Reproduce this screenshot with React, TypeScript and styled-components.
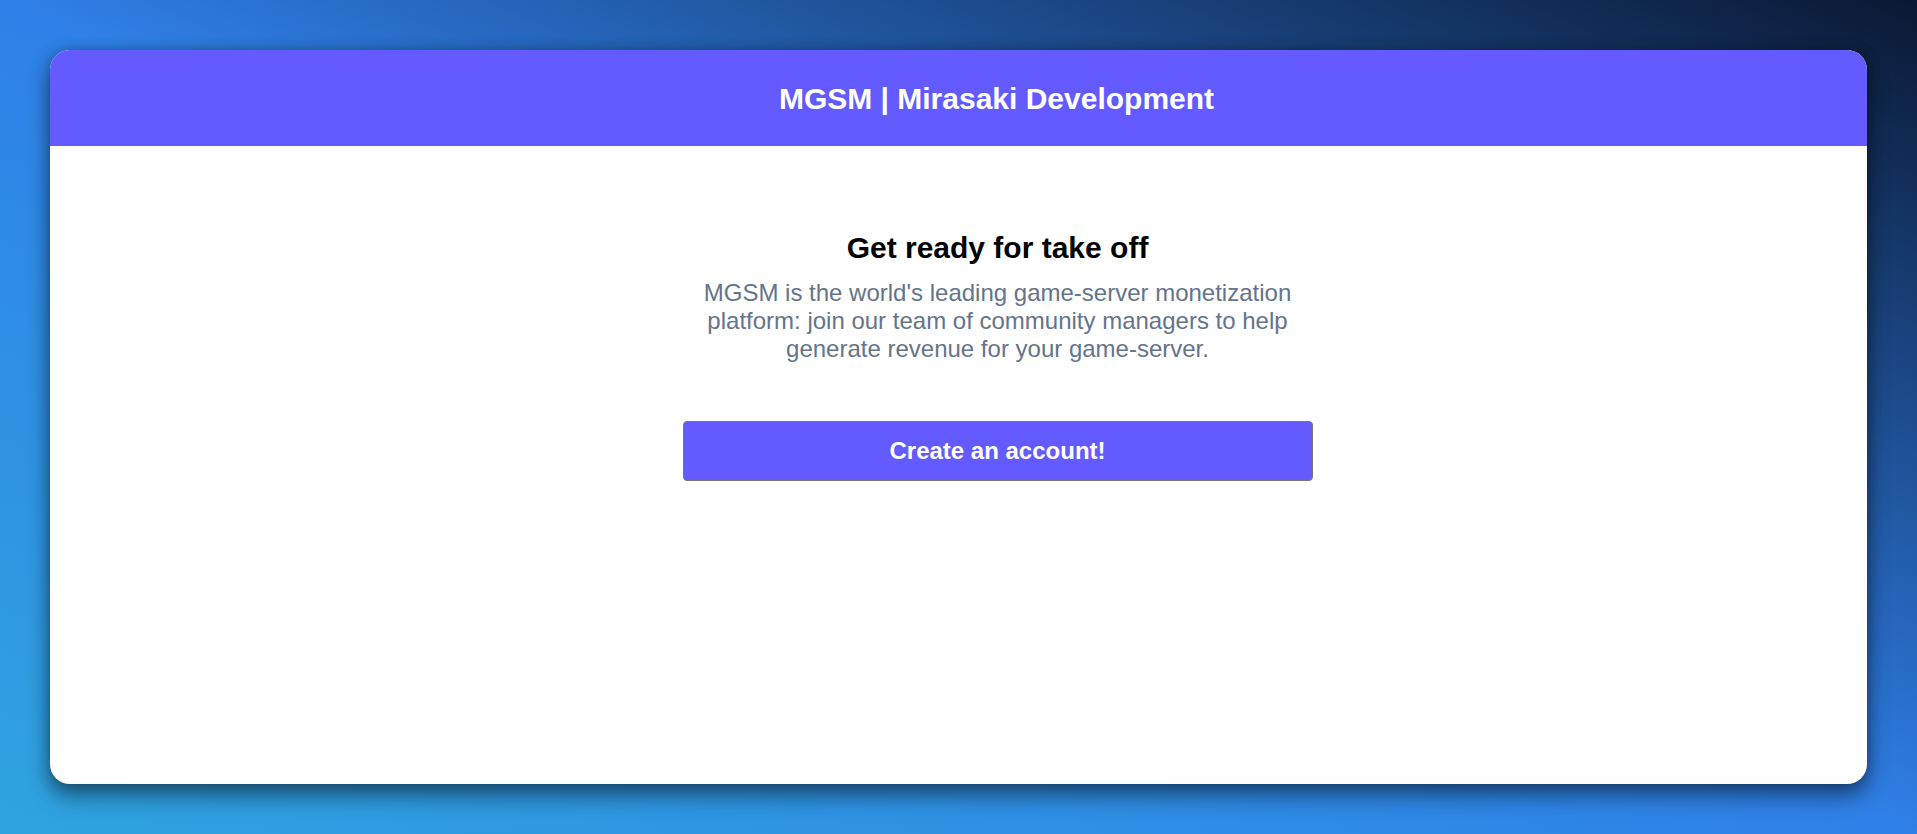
import styled, { createGlobalStyle } from 'styled-components'

const GlobalStyle = createGlobalStyle`
  html, body {
    margin: 0;
    padding: 0;
  }
  body {
    font-family: "Liberation Sans", Arial, Helvetica, sans-serif;
    background: linear-gradient(to top right, #2ea4df 0%, #2f80e8 50%, #0a1832 100%);
    min-height: 100vh;
  }
`

const PageBox = styled.div`
  box-sizing: border-box;
  height: 100vh;
  padding: 50px;
  display: flex;
`

const CardBox = styled.div`
  flex: 1;
  display: flex;
  flex-direction: column;
  background: #ffffff;
  border-radius: 20px;
  overflow: hidden;
  box-shadow: 0 12px 22px rgba(0, 0, 0, 0.45), 0 0 14px rgba(0, 0, 0, 0.25);
`

const HeaderBox = styled.header`
  box-sizing: border-box;
  height: 96px;
  flex-shrink: 0;
  display: flex;
  align-items: center;
  justify-content: center;
  padding: 2px 0 0 76px;
  background: #635bff;
  color: #ffffff;
  font-size: 30px;
  font-weight: 700;
`

const ContentBox = styled.main`
  display: flex;
  flex-direction: column;
  align-items: center;
  padding: 85px 0 0 78px;
`

const TitleBox = styled.h2`
  margin: 0;
  font-size: 30px;
  font-weight: 700;
  color: #000000;
`

const TextBox = styled.p`
  margin: 14px 0 0;
  width: 630px;
  text-align: center;
  font-size: 24px;
  color: #64748b;
`

const Button = styled.button`
  margin-top: 58px;
  width: 630px;
  height: 60px;
  border: 1px solid #767676;
  border-radius: 4px;
  background: #635bff;
  color: #ffffff;
  font-family: inherit;
  font-size: 24px;
  font-weight: 700;
  cursor: pointer;
`

export default function App() {
  return (
    <>
      <GlobalStyle />
      <PageBox>
        <CardBox>
          <HeaderBox>MGSM | Mirasaki Development</HeaderBox>
          <ContentBox>
            <TitleBox>Get ready for take off</TitleBox>
            <TextBox>
              MGSM is the world's leading game-server monetization platform:
              join our team of community managers to help generate revenue for
              your game-server.
            </TextBox>
            <Button>Create an account!</Button>
          </ContentBox>
        </CardBox>
      </PageBox>
    </>
  )
}
